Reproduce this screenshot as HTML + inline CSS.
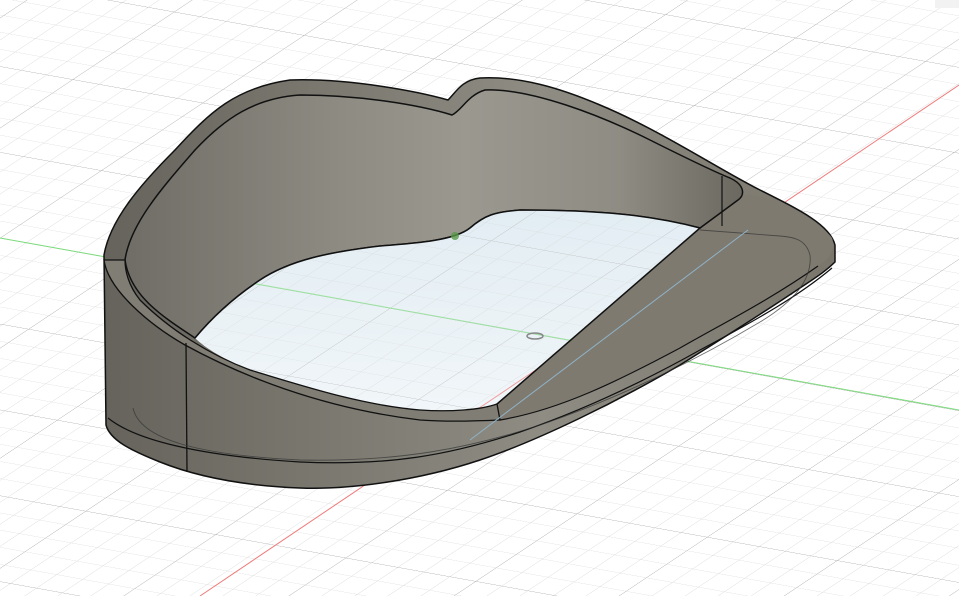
<!DOCTYPE html>
<html><head><style>
html,body{margin:0;padding:0;background:#fff;}
svg{display:block;}
</style></head><body>
<svg width="959" height="596" viewBox="0 0 959 596" xmlns="http://www.w3.org/2000/svg">
<defs>
<pattern id="g" width="26" height="26" patternUnits="userSpaceOnUse" patternTransform="matrix(1,0.18,-0.78,0.52,0,238)">
<path d="M0 0H26M0 0V26" stroke="#d2d2d2" stroke-width="0.9" fill="none"/>
</pattern>
<pattern id="G" width="130" height="130" patternUnits="userSpaceOnUse" patternTransform="matrix(1,0.18,-0.78,0.52,0,238)">
<path d="M0 0H130M0 0V130" stroke="#b0b0b0" stroke-width="1" fill="none"/>
</pattern>
<linearGradient id="wall" x1="0" y1="0" x2="1" y2="0">
<stop offset="0" stop-color="#6f6d65"/><stop offset="0.35" stop-color="#8d8b82"/><stop offset="0.55" stop-color="#9a988f"/><stop offset="0.8" stop-color="#8e8c83"/><stop offset="1" stop-color="#6a685f"/>
</linearGradient>
<linearGradient id="front" x1="0" y1="0" x2="1" y2="0">
<stop offset="0" stop-color="#65635b"/><stop offset="0.3" stop-color="#7a786f"/><stop offset="0.6" stop-color="#8e8c83"/><stop offset="1" stop-color="#7a766c"/>
</linearGradient>
<linearGradient id="floor" x1="0" y1="0" x2="0" y2="1">
<stop offset="0" stop-color="#e2edf3"/><stop offset="1" stop-color="#f1f6f9"/>
</linearGradient>
<clipPath id="fc"><path d="M195 338 C210 320 230 300 260 280 C290 260 330 252 380 246 C420 243 455 240 470 228 C485 215 495 212 520 210 C600 210 650 215 700 228 L497 404 C480 410 450 412 420 410 C360 405 300 385 250 370 C225 360 205 348 195 338 Z"/></clipPath>
</defs>
<rect width="959" height="596" fill="#fff"/>
<rect width="959" height="596" fill="url(#g)"/>
<rect width="959" height="596" fill="url(#G)"/>
<line x1="0" y1="238" x2="959" y2="410" stroke="#7ddc7d" stroke-width="1"/>
<line x1="200" y1="596" x2="959" y2="85" stroke="#ef7b7b" stroke-width="1"/>
<!-- silhouette / outer body -->
<path d="M104 255 C110 220 140 185 175 150 C210 112 235 88 290 80 C350 78 420 92 448 100 C456 92 462 80 480 78 C520 76 560 88 600 105 C660 130 720 170 760 190 C800 210 830 225 835 245 L835 262 C825 272 815 278 800 288 C760 315 720 340 680 365 C620 400 540 440 480 460 C420 480 350 490 300 488 C250 486 200 478 160 462 C130 450 110 440 106 425 Z" fill="url(#front)" stroke="#111" stroke-width="1.5"/>
<!-- right top rim face -->
<path d="M700 228 L742 195 C760 190 820 220 832 238 C836 250 830 258 818 266 C770 300 720 325 680 348 C620 380 560 410 500 420 L497 404 Z" fill="#7e7a70"/>
<!-- inner back wall -->
<path d="M125 260 C130 225 160 190 195 150 C225 118 255 98 300 95 C360 95 420 105 452 115 C462 110 468 95 485 90 C530 88 600 115 650 140 C680 155 710 170 730 178 C745 185 745 195 738 200 L700 228 C650 215 600 210 520 210 C495 212 485 215 470 228 C455 240 420 243 380 246 C330 252 290 260 260 280 C230 300 210 320 195 338 C160 315 130 295 125 260 Z" fill="url(#wall)" stroke="#111" stroke-width="1.5"/>
<!-- floor -->
<path d="M195 338 C210 320 230 300 260 280 C290 260 330 252 380 246 C420 243 455 240 470 228 C485 215 495 212 520 210 C600 210 650 215 700 228 L497 404 C480 410 450 412 420 410 C360 405 300 385 250 370 C225 360 205 348 195 338 Z" fill="url(#floor)"/>
<g clip-path="url(#fc)" opacity="0.7">
<rect width="959" height="596" fill="url(#g)"/>
<rect width="959" height="596" fill="url(#G)"/>
<line x1="0" y1="238" x2="959" y2="410" stroke="#7ddc7d" stroke-width="1"/>
<line x1="200" y1="596" x2="959" y2="85" stroke="#ef7b7b" stroke-width="1"/>
</g>
<path d="M195 338 C210 320 230 300 260 280 C290 260 330 252 380 246 C420 243 455 240 470 228 C485 215 495 212 520 210 C600 210 650 215 700 228" fill="none" stroke="#111" stroke-width="1.5"/>
<!-- near rim band -->
<path d="M104 260 C108 290 150 325 185 345 C240 375 320 408 420 420 C450 422 475 421 500 420 L497 404 C480 410 450 412 420 410 C360 405 300 385 250 370 C210 355 170 330 140 300 C128 285 125 270 125 260 Z" fill="#807d74" stroke="#111" stroke-width="1.3"/>
<path d="M497 404 L700 228" stroke="#111" stroke-width="1.5"/>
<path d="M500 420 C560 410 620 380 680 348 C720 325 770 300 818 266" fill="none" stroke="#111" stroke-width="1.2"/>
<line x1="722" y1="176" x2="722" y2="226" stroke="#111" stroke-width="1.2"/>
<!-- interior lines -->
<path d="M186 343 L187 472" stroke="#111" stroke-width="1.3"/>
<path d="M108 418 C135 440 200 456 300 462 C390 466 450 455 520 432 C590 408 650 378 700 350 C760 318 800 295 832 268" fill="none" stroke="#111" stroke-width="1.2"/>
<path d="M133 408 C140 440 200 455 300 460 C400 462 470 448 540 425 C620 398 700 358 760 322 C800 298 812 275 810 255 C806 240 795 237 780 236 L700 230" fill="none" stroke="#333" stroke-width="0.9" opacity="0.7"/>
<path d="M470 440 L748 230" stroke="#8fb3c8" stroke-width="1"/>
<ellipse cx="535" cy="336" rx="8" ry="3" fill="none" stroke="#888" stroke-width="1.5"/>
<circle cx="455" cy="236" r="4" fill="#5a9a4a" opacity="0.8"/>
<rect x="935" y="0" width="24" height="8" fill="#f2f2f2"/>
</svg>
</body></html>
